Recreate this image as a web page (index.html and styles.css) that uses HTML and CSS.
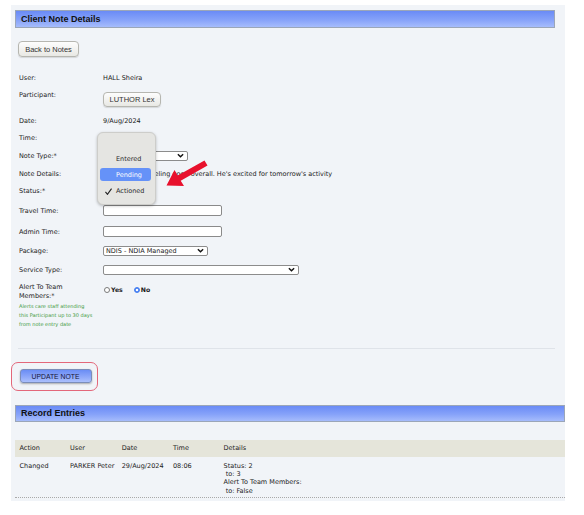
FILE: index.html
```html
<!DOCTYPE html>
<html>
<head>
<meta charset="utf-8">
<title>Client Note Details</title>
<link rel="stylesheet" href="styles.css">
</head>
<body>
<div class="panel">
  <div class="bar bar-main">Client Note Details</div>
  <button class="btn-gray btn-back">Back to Notes</button>

  <div class="form">
    <div class="lbl">User:</div>
    <div class="val">HALL Sheira</div>

    <div class="lbl lbl-top">Participant:</div>
    <div class="val"><button class="btn-gray btn-part">LUTHOR Lex</button></div>

    <div class="lbl">Date:</div>
    <div class="val">9/Aug/2024</div>

    <div class="lbl">Time:</div>
    <div class="val"></div>

    <div class="lbl">Note Type:*</div>
    <div class="val"><div class="select sel-type"><svg class="chev" viewBox="0 0 8 5"><polyline points="1,1 4,4 7,1"/></svg></div></div>

    <div class="lbl">Note Details:</div>
    <div class="val nowrap">Lex has been feeling good overall. He's excited for tomorrow's activity</div>

    <div class="lbl">Status:*</div>
    <div class="val"></div>

    <div class="lbl">Travel Time:</div>
    <div class="val"><input class="txt" type="text"></div>

    <div class="lbl">Admin Time:</div>
    <div class="val"><input class="txt" type="text"></div>

    <div class="lbl">Package:</div>
    <div class="val"><div class="select sel-pkg"><span>NDIS - NDIA Managed</span><svg class="chev" viewBox="0 0 8 5"><polyline points="1,1 4,4 7,1"/></svg></div></div>

    <div class="lbl">Service Type:</div>
    <div class="val"><div class="select sel-svc"><svg class="chev" viewBox="0 0 8 5"><polyline points="1,1 4,4 7,1"/></svg></div></div>

    <div class="lbl lbl-alert">
      <div class="alert-title">Alert To Team<br>Members:*</div>
      <div class="hint">Alerts care staff attending<br>this Participant up to 30 days<br>from note entry date</div>
    </div>
    <div class="val val-alert">
      <div class="opts">
        <label class="opt"><span class="radio"></span><span>Yes</span></label>
        <label class="opt"><span class="radio on"></span><span>No</span></label>
      </div>
    </div>
  </div>

  <div class="sep"></div>

  <div class="update-wrap">
    <button class="btn-update">UPDATE NOTE</button>
  </div>

  <div class="bar bar-rec">Record Entries</div>

  <div class="table">
    <div class="tr th">
      <div>Action</div><div>User</div><div>Date</div><div>Time</div><div>Details</div>
    </div>
    <div class="tr td">
      <div>Changed</div>
      <div>PARKER Peter</div>
      <div>29/Aug/2024</div>
      <div class="cell-time">08:06</div>
      <div class="details">Status: 2<br>&nbsp;to: 3<br>Alert To Team Members:<br>&nbsp;to: False</div>
    </div>
  </div>
</div>

<div class="popup">
  <div class="item"><span class="chk"></span>Entered</div>
  <div class="item item-on"><span class="chk"></span>Pending</div>
  <div class="item item-act"><span class="chk"><svg viewBox="0 0 8 8"><polyline points="0.5,4.5 2.8,7.2 7.5,0.8"/></svg></span>Actioned</div>
</div>

<svg class="arrow" viewBox="0 0 55 35" width="55" height="35">
  <polygon points="47.5,10.6 20.7,25.7 24,31 6.5,30.5 14.5,15 17.7,20.5 44.5,5.4"/>
</svg>
</body>
</html>
```

FILE: styles.css
```css
html, body {
  margin: 0;
  padding: 0;
  background: #ffffff;
}

body {
  font-family: "DejaVu Sans", Verdana, sans-serif;
  font-size: 6.5px;
  color: #222222;
  width: 584px;
  height: 515px;
  overflow: hidden;
}

.panel {
  margin: 5px 0 0 11px;
  width: 554px;
  background: #f1f4f8;
  padding: 5px 0 3px 0;
  display: flex;
  flex-direction: column;
  align-items: flex-start;
}

.bar {
  box-sizing: border-box;
  height: 18px;
  margin-left: 4px;
  border: 1px solid #9ba6b8;
  background: linear-gradient(to bottom, #6a8bf6 0%, #86a2f9 55%, #a6bcfc 100%);
  font-family: "Liberation Sans", Arial, sans-serif;
  font-weight: bold;
  font-size: 9px;
  color: #111111;
  display: flex;
  align-items: center;
  padding-left: 5px;
}

.bar-main {
  width: 540px;
}

.bar-rec {
  width: 550px;
  height: 17px;
  margin-top: 14px;
}

.btn-gray {
  box-sizing: border-box;
  margin: 0;
  padding: 0;
  border: 1px solid #b6b6b0;
  border-radius: 4px;
  background: linear-gradient(to bottom, #fdfdfd, #e8e8e4);
  box-shadow: 0 1px 1px rgba(0, 0, 0, 0.12);
  font-family: "Liberation Sans", Arial, sans-serif;
  font-size: 7.5px;
  color: #333333;
  display: flex;
  align-items: center;
  justify-content: center;
}

.btn-back {
  width: 61px;
  height: 16px;
  margin: 13px 0 0 7px;
}

.btn-part {
  width: 58px;
  height: 15px;
}

.form {
  margin: 12px 0 0 8px;
  display: grid;
  grid-template-columns: 84px 1fr;
  grid-template-rows: 17px 27px 15px 19px 17px 20px 14px 25px 17px 21px 17px 70px;
  align-items: center;
  width: 540px;
  line-height: 8px;
}

.lbl {
  color: #222222;
}

.lbl-top {
  align-self: start;
  padding-top: 5px;
}

.nowrap {
  white-space: nowrap;
}

.lbl-alert {
  align-self: start;
  padding-top: 5px;
}

.alert-title {
  line-height: 9px;
}

.hint {
  font-size: 5px;
  line-height: 9.4px;
  margin-top: 0.5px;
  color: #3a983a;
  white-space: nowrap;
}

.val-alert {
  align-self: start;
  padding-top: 8px;
}

.select {
  box-sizing: border-box;
  height: 10px;
  background: #ffffff;
  border: 1px solid #8c8c8c;
  border-radius: 2px;
  display: flex;
  align-items: center;
  justify-content: space-between;
  padding: 0 3px 0 2px;
  line-height: 8px;
}

.sel-type {
  width: 85px;
  height: 10px;
}

.sel-pkg {
  width: 105px;
}

.sel-svc {
  width: 196px;
}

.chev {
  width: 7px;
  height: 5px;
  margin-left: auto;
  fill: none;
  stroke: #111111;
  stroke-width: 1.6;
}

.txt {
  box-sizing: border-box;
  display: block;
  width: 119px;
  height: 11px;
  margin: 0;
  padding: 0;
  border: 1px solid #8a8a8a;
  border-radius: 2px;
  background: #ffffff;
}

.opts {
  display: flex;
  align-items: center;
  gap: 11px;
  padding-left: 1px;
}

.opt {
  display: flex;
  align-items: center;
  gap: 1px;
  font-weight: bold;
  font-size: 6.2px;
  color: #1a1a1a;
}

.radio {
  box-sizing: border-box;
  width: 6px;
  height: 6px;
  border-radius: 50%;
  border: 1px solid #7a7a7a;
  background: #ffffff;
}

.radio.on {
  border-color: #3d78ef;
  background: radial-gradient(circle, #ffffff 0 0.9px, #5b8ff7 1.4px);
}

.sep {
  width: 537px;
  height: 1px;
  margin-left: 7px;
  background: #dfe3e9;
}

.update-wrap {
  margin: 12.5px 0 0 -0.5px;
  border: 1.5px solid #e3677a;
  border-radius: 7px;
  padding: 6.5px 5px 6.5px 8px;
}

.btn-update {
  box-sizing: border-box;
  display: flex;
  align-items: center;
  justify-content: center;
  width: 72px;
  height: 14px;
  margin: 0;
  padding: 0;
  border: 1px solid #7b8db9;
  border-radius: 3px;
  background: linear-gradient(to bottom, #6a8df5, #8fa9fa 60%, #abc0fc);
  box-shadow: 0 1px 2px rgba(0, 0, 0, 0.3);
  font-family: "Liberation Sans", Arial, sans-serif;
  font-size: 6.8px;
  color: #15153a;
}

.table {
  margin: 18px 0 0 4px;
  width: 550px;
  color: #222222;
}

.tr {
  display: grid;
  grid-template-columns: 50.5px 51.7px 51.3px 50.6px 1fr;
  padding-left: 4.5px;
}

.th {
  height: 17.5px;
  align-items: center;
  background: #e5e5da;
}

.td {
  padding-top: 4.8px;
  padding-bottom: 2px;
  line-height: 8.33px;
  border-bottom: 1px dotted #a9a9a9;
  align-items: start;
  color: #222222;
}

.cell-time {
  color: #222222;
}

.popup {
  position: absolute;
  left: 97px;
  top: 132px;
  box-sizing: border-box;
  width: 59px;
  height: 73px;
  padding-top: 19px;
  background: #e5e5e2;
  border: 1px solid #cdcdca;
  border-radius: 6px;
  box-shadow: 0 1px 3px rgba(0, 0, 0, 0.25);
}

.item {
  display: flex;
  align-items: center;
  height: 13px;
  margin: 0 4px 0 2px;
  border-radius: 3px;
  color: #2a2a2a;
}

.item-on {
  margin-top: 3px;
  background: #6592f8;
  color: #ffffff;
}

.item-act {
  margin-top: 3.5px;
}

.chk {
  width: 16px;
  height: 8px;
  display: flex;
  align-items: center;
}

.chk svg {
  width: 7px;
  height: 7px;
  margin-left: 5px;
  fill: none;
  stroke: #222222;
  stroke-width: 1.3;
}

.arrow {
  position: absolute;
  left: 160px;
  top: 155px;
  fill: #e8112d;
}
```
